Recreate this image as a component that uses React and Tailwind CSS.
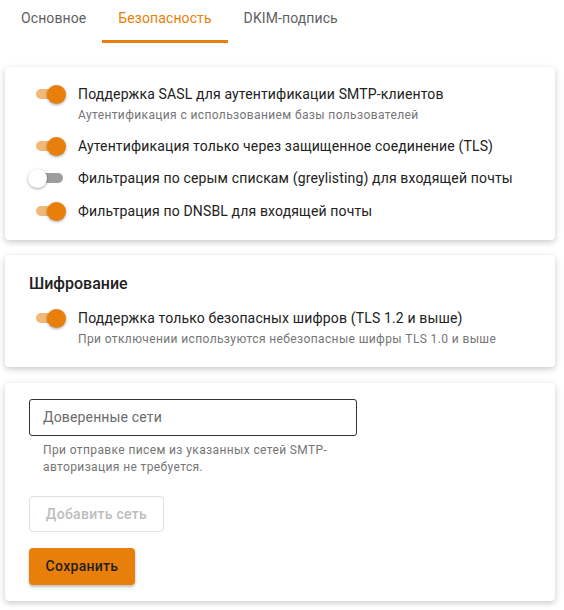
import React, { useState } from "react";

const Toggle = ({ on }) => (
  <div className="relative h-5 w-[38px] shrink-0">
    <div
      className={`absolute left-2 top-[5px] h-[10px] w-[27px] rounded-full ${
        on ? "bg-[#f2b877]" : "bg-[#9e9e9e]"
      }`}
    />
    <div
      className={`absolute top-[1px] h-[19px] w-[19px] rounded-full shadow-[0_1px_3px_rgba(0,0,0,0.35)] ${
        on ? "left-[19px] bg-[#e87f0a]" : "left-0 bg-white"
      }`}
    />
  </div>
);

const SwitchRow = ({ on, label, hint }) => (
  <div className="flex items-start gap-3">
    <Toggle on={on} />
    <div>
      <div className="text-[14px] leading-5 tracking-[0.15px] text-[#212121]">{label}</div>
      {hint && (
        <div className="mt-[3px] text-[12px] leading-4 tracking-[0.38px] text-[#757575]">{hint}</div>
      )}
    </div>
  </div>
);

const App = () => {
  const [tab] = useState(1);
  const tabs = ["Основное", "Безопасность", "DKIM-подпись"];

  return (
    <div className="min-h-[610px] w-[564px] bg-white font-['Roboto',sans-serif]">
      <div className="flex pl-[5px]">
        {tabs.map((t, i) => (
          <div
            key={t}
            className={`flex h-[43px] items-center border-b-[3px] px-4 pb-[4px] text-[14px] tracking-[0.1px] ${
              i === tab ? "border-[#e87f0a] text-[#e87f0a]" : "border-transparent text-[#5f5f5f]"
            }`}
          >
            {t}
          </div>
        ))}
      </div>

      <div className="flex flex-col gap-[15px] pl-[5px] pr-[9px] pt-6 pb-2">
        <div className="flex flex-col gap-[12px] rounded bg-white px-[23px] pt-[17px] pb-[19px] shadow-[0_2px_6px_rgba(0,0,0,0.22)]">
          <SwitchRow
            on
            label="Поддержка SASL для аутентификации SMTP-клиентов"
            hint="Аутентификация с использованием базы пользователей"
          />
          <div className="mt-px">
            <SwitchRow on label="Аутентификация только через защищенное соединение (TLS)" />
          </div>
          <SwitchRow on={false} label="Фильтрация по серым спискам (greylisting) для входящей почты" />
          <div className="mt-px">
            <SwitchRow on label="Фильтрация по DNSBL для входящей почты" />
          </div>
        </div>

        <div className="rounded bg-white px-[24px] pt-[19px] pb-[20px] shadow-[0_2px_6px_rgba(0,0,0,0.22)]">
          <div className="text-[16px] font-medium leading-5 text-[#212121]">Шифрование</div>
          <div className="mt-[14px] -ml-px">
            <SwitchRow
              on
              label="Поддержка только безопасных шифров (TLS 1.2 и выше)"
              hint="При отключении используются небезопасные шифры TLS 1.0 и выше"
            />
          </div>
        </div>

        <div className="mt-px rounded bg-white px-[24px] pt-[16px] pb-[16px] shadow-[0_2px_6px_rgba(0,0,0,0.22)]">
          <div className="flex h-[37px] w-[328px] items-center rounded-[3px] border border-[#333] px-[13px] text-[14px] tracking-[0.15px] text-[#6b6b6b]">
            Доверенные сети
          </div>
          <div className="mt-[6px] w-[320px] pl-[14px] text-[12px] leading-[17px] tracking-[0.38px] text-[#757575]">
            При отправке писем из указанных сетей SMTP-авторизация не требуется.
          </div>
          <button className="mt-[20px] flex h-[36px] w-[135px] items-center justify-center rounded border border-[#e0e0e0] text-[14px] font-medium tracking-[0.3px] text-[#bdbdbd]">
            Добавить сеть
          </button>
          <button className="mt-[16px] flex h-[37px] w-[106px] items-center justify-center rounded bg-[#e87f0a] text-[14px] font-medium tracking-[0.3px] text-[#1f1f1f] shadow-[0_2px_3px_rgba(0,0,0,0.25)]">
            Сохранить
          </button>
        </div>
      </div>
    </div>
  );
};

export default App;
